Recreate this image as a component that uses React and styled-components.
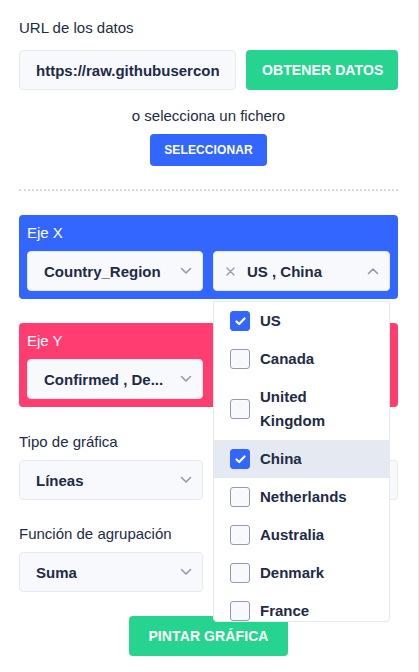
import React from "react";
import styled, { createGlobalStyle } from "styled-components";

const Global = createGlobalStyle`
  html, body { margin: 0; padding: 0; background: #ffffff; }
  body { font-family: "Liberation Sans", Arial, sans-serif; color: #222b45; }
  * { box-sizing: border-box; }
`;

const Page = styled.div`
  position: relative;
  width: 419px;
  min-height: 672px;
  border-right: 1px solid #e4e9f2;
  padding: 18px 20px 16px 19px;
`;

const Label = styled.div`
  font-size: 15px;
  line-height: 20px;
  color: ${(p) => (p.$light ? "#ffffff" : "#222b45")};
  margin-top: ${(p) => p.$mt || 0}px;
`;

const Row = styled.div`
  display: flex;
  gap: 10px;
  margin-top: 12px;
`;

const Input = styled.div`
  flex: 1;
  min-width: 0;
  height: 40px;
  background: #f7f9fc;
  border: 1px solid #e4e9f2;
  border-radius: 4px;
  padding: 0 16px;
  display: flex;
  align-items: center;
`;

const InputText = styled.span`
  flex: 1;
  overflow: hidden;
  white-space: nowrap;
  font-weight: 700;
  font-size: 15px;
  color: #222b45;
`;

const Button = styled.button`
  height: ${(p) => p.$h || 40}px;
  width: ${(p) => (p.$w ? `${p.$w}px` : "auto")};
  padding: 0 ${(p) => p.$px || 16}px;
  border: none;
  border-radius: 4px;
  background: ${(p) => p.$bg};
  color: #ffffff;
  font-family: inherit;
  font-weight: 700;
  font-size: ${(p) => p.$fs || 14}px;
  text-transform: uppercase;
  letter-spacing: 0.1px;
  white-space: nowrap;
`;

const Center = styled.div`
  display: flex;
  flex-direction: column;
  align-items: center;
  margin-top: ${(p) => p.$mt || 0}px;
  gap: 8px;
`;

const Note = styled.div`
  font-size: 15px;
  line-height: 20px;
  color: #222b45;
`;

const Divider = styled.div`
  margin-top: 23px;
  border-top: 2px dotted #d5d9e0;
`;

const Panel = styled.div`
  margin-top: ${(p) => p.$mt || 24}px;
  background: ${(p) => p.$bg};
  border-radius: 4px;
  padding: 8px;
`;

const Grid = styled.div`
  display: grid;
  grid-template-columns: 176px 1fr;
  column-gap: 10px;
  margin-top: 8px;
`;

const PlainGrid = styled.div`
  display: grid;
  grid-template-columns: 184px 1fr;
  column-gap: 10px;
`;

const Field = styled.div`
  display: flex;
  flex-direction: column;
`;

const SelectBox = styled.div`
  position: relative;
  height: 40px;
  margin-top: ${(p) => p.$mt || 0}px;
  background: #f7f9fc;
  border: 1px solid #e4e9f2;
  border-radius: 4px;
  display: flex;
  align-items: center;
  padding: 0 10px 0 ${(p) => p.$pl || 16}px;
  gap: 8px;
`;

const SelectText = styled.span`
  flex: 1;
  font-weight: 700;
  font-size: 15px;
  color: #222b45;
  white-space: nowrap;
  overflow: hidden;
`;

const Dropdown = styled.div`
  position: absolute;
  top: 301px;
  left: 213px;
  width: 177px;
  height: 321px;
  background: #ffffff;
  border: 1px solid #e4e9f2;
  border-radius: 0 0 4px 4px;
  overflow: hidden;
  z-index: 5;
`;

const Option = styled.div`
  display: flex;
  align-items: center;
  gap: 10px;
  padding: 7px 22px 7px 16px;
  background: ${(p) => (p.$active ? "#e4e9f2" : "transparent")};
  font-weight: 700;
  font-size: 15px;
  line-height: 24px;
  color: #222b45;
`;

const Check = styled.span`
  flex: none;
  width: 20px;
  height: 20px;
  border-radius: 3px;
  border: 1px solid ${(p) => (p.$on ? "#3366ff" : "#8f9bb3")};
  background: ${(p) => (p.$on ? "#3366ff" : "#f7f9fc")};
  display: flex;
  align-items: center;
  justify-content: center;
`;

const Chevron = ({ up }) => (
  <svg width="12" height="8" viewBox="0 0 12 8" fill="none">
    <polyline
      points={up ? "1.5,6.5 6,2 10.5,6.5" : "1.5,1.5 6,6 10.5,1.5"}
      stroke="#8f9bb3"
      strokeWidth="1.6"
      strokeLinecap="round"
      strokeLinejoin="round"
    />
  </svg>
);

const Cross = () => (
  <svg width="9" height="9" viewBox="0 0 9 9" fill="none" style={{ marginRight: 4 }}>
    <path d="M1 1L8 8M8 1L1 8" stroke="#8f9bb3" strokeWidth="1.3" strokeLinecap="round" />
  </svg>
);

const Tick = () => (
  <svg width="11" height="9" viewBox="0 0 11 9" fill="none">
    <polyline points="1.5,4.5 4.2,7 9.5,1.5" stroke="#fff" strokeWidth="2.2" strokeLinecap="round" strokeLinejoin="round" />
  </svg>
);

const options = [
  { name: "US", on: true },
  { name: "Canada" },
  { name: "United Kingdom" },
  { name: "China", on: true, active: true },
  { name: "Netherlands" },
  { name: "Australia" },
  { name: "Denmark" },
  { name: "France" },
  { name: "Germany" },
];

export default function App() {
  return (
    <>
      <Global />
      <Page>
        <Label>URL de los datos</Label>
        <Row>
          <Input>
            <InputText>https://raw.githubusercontent.com/CSSEGISandData</InputText>
          </Input>
          <Button $bg="#26d48f" $w={152}>Obtener datos</Button>
        </Row>
        <Center $mt={16}>
          <Note>o selecciona un fichero</Note>
          <Button $bg="#3366ff" $h={32} $fs={12} $px={14}>Seleccionar</Button>
        </Center>
        <Divider />

        <Panel $bg="#3366ff">
          <Label $light>Eje X</Label>
          <Grid>
            <SelectBox>
              <SelectText>Country_Region</SelectText>
              <Chevron />
            </SelectBox>
            <SelectBox $pl={12}>
              <Cross />
              <SelectText>US , China</SelectText>
              <Chevron up />
            </SelectBox>
          </Grid>
        </Panel>

        <Panel $bg="#ff3d71">
          <Label $light>Eje Y</Label>
          <Grid>
            <SelectBox>
              <SelectText>Confirmed , De...</SelectText>
              <Chevron />
            </SelectBox>
            <SelectBox>
              <SelectText>Date</SelectText>
              <Chevron />
            </SelectBox>
          </Grid>
        </Panel>

        <PlainGrid>
          <Field>
            <Label $mt={25}>Tipo de gráfica</Label>
            <SelectBox $mt={8}>
              <SelectText>Líneas</SelectText>
              <Chevron />
            </SelectBox>
          </Field>
          <Field>
            <Label $mt={25}>Color</Label>
            <SelectBox $mt={8}>
              <SelectText>Azul</SelectText>
              <Chevron />
            </SelectBox>
          </Field>
        </PlainGrid>

        <PlainGrid>
          <Field>
            <Label $mt={24}>Función de agrupación</Label>
            <SelectBox $mt={8}>
              <SelectText>Suma</SelectText>
              <Chevron />
            </SelectBox>
          </Field>
        </PlainGrid>

        <Center $mt={24}>
          <Button $bg="#26d48f" $px={19}>Pintar gráfica</Button>
        </Center>

        <Dropdown>
          {options.map((o) => (
            <Option key={o.name} $active={o.active}>
              <Check $on={o.on}>{o.on && <Tick />}</Check>
              <span>{o.name}</span>
            </Option>
          ))}
        </Dropdown>
      </Page>
    </>
  );
}
